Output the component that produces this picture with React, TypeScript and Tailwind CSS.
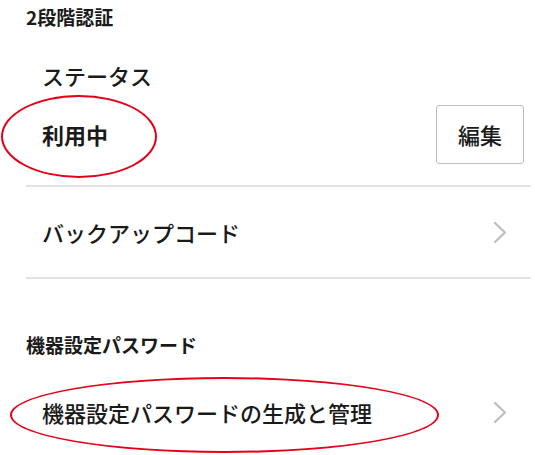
import React from 'react';

const FONT = { fontFamily: '"Noto Sans CJK JP", "Noto Sans", sans-serif' };

function Chevron() {
  return (
    <svg width="14" height="23" viewBox="0 0 14 23" fill="none" stroke="#bdbdbd" strokeWidth="2.2" strokeLinecap="round" strokeLinejoin="round">
      <path d="M2 2 L12 11.5 L2 21" />
    </svg>
  );
}

function Divider() {
  return <div className="h-[2px] bg-[#e3e3e3] ml-[26px] mr-[4px]" />;
}

export default function App() {
  return (
    <div className="relative w-[535px] h-[455px] bg-white text-[#1a1a1a] overflow-hidden" style={FONT}>
      {/* 2段階認証 */}
      <div className="h-[34px] flex items-center px-[26px] text-[19px] font-bold">2段階認証</div>

      {/* Status */}
      <div className="pt-[26px] pb-[21px] pl-[42px] pr-[11px]">
        <div className="h-[30px] flex items-center text-[22px] font-medium">ステータス</div>
        <div className="mt-[14px] h-[60px] flex items-center justify-between">
          <span className="text-[22px] font-bold">利用中</span>
          <button className="w-[88px] h-[59px] border border-[#bdbdbd] rounded-[3px] text-[22px] font-medium">編集</button>
        </div>
      </div>
      <Divider />

      {/* Backup code */}
      <div className="h-[90px] flex items-center justify-between pl-[42px] pr-[28px]">
        <span className="text-[22px] font-medium">バックアップコード</span>
        <Chevron />
      </div>
      <Divider />

      {/* 機器設定パスワード */}
      <div className="mt-[51px] h-[30px] flex items-center px-[26px] text-[19px] font-bold">機器設定パスワード</div>
      <div className="mt-[17px] h-[70px] flex items-center justify-between pl-[42px] pr-[28px]">
        <span className="text-[22px] font-medium">機器設定パスワードの生成と管理</span>
        <Chevron />
      </div>

      {/* red annotation ellipses */}
      <div className="absolute left-[1px] top-[95px] w-[156px] h-[83px] rounded-[50%] border-2 border-[#e5001a]" />
      <div className="absolute left-[10px] top-[377px] w-[429px] h-[76px] rounded-[50%] border-2 border-[#e5001a]" />
    </div>
  );
}
